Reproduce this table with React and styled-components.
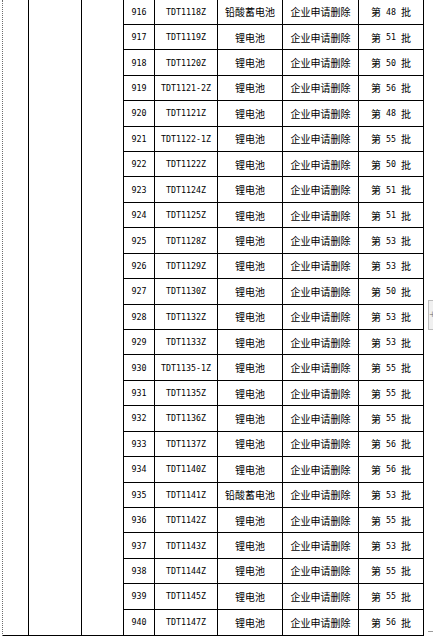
import React from "react";
import styled, { createGlobalStyle } from "styled-components";

const GlobalStyle = createGlobalStyle`
  html, body {
    margin: 0;
    padding: 0;
    background: #ffffff;
    overflow: hidden;
  }
  * {
    box-sizing: border-box;
  }
`;

const rows = [
  ["916", "TDT1118Z", "铅酸蓄电池", "48"],
  ["917", "TDT1119Z", "锂电池", "51"],
  ["918", "TDT1120Z", "锂电池", "50"],
  ["919", "TDT1121-2Z", "锂电池", "56"],
  ["920", "TDT1121Z", "锂电池", "48"],
  ["921", "TDT1122-1Z", "锂电池", "55"],
  ["922", "TDT1122Z", "锂电池", "50"],
  ["923", "TDT1124Z", "锂电池", "51"],
  ["924", "TDT1125Z", "锂电池", "51"],
  ["925", "TDT1128Z", "锂电池", "53"],
  ["926", "TDT1129Z", "锂电池", "53"],
  ["927", "TDT1130Z", "锂电池", "50"],
  ["928", "TDT1132Z", "锂电池", "53"],
  ["929", "TDT1133Z", "锂电池", "53"],
  ["930", "TDT1135-1Z", "锂电池", "55"],
  ["931", "TDT1135Z", "锂电池", "55"],
  ["932", "TDT1136Z", "锂电池", "55"],
  ["933", "TDT1137Z", "锂电池", "56"],
  ["934", "TDT1140Z", "锂电池", "56"],
  ["935", "TDT1141Z", "铅酸蓄电池", "53"],
  ["936", "TDT1142Z", "锂电池", "55"],
  ["937", "TDT1143Z", "锂电池", "53"],
  ["938", "TDT1144Z", "锂电池", "55"],
  ["939", "TDT1145Z", "锂电池", "55"],
  ["940", "TDT1147Z", "锂电池", "56"],
];

const Page = styled.div`
  position: relative;
  display: flex;
  height: 636px;
  padding-left: 2px;
  margin-top: -0.5px;
`;

const DottedRule = styled.div`
  width: 1px;
  height: 636px;
  border-left: 1px dotted #6e6e6e;
`;

const Sheet = styled.div`
  display: flex;
  align-self: flex-start;
  border-bottom: 2px solid #000;
`;

const MergedCol = styled.div`
  width: ${(p) => p.$w}px;
  border-right: 1px solid #000;
`;

const Rows = styled.div`
  display: flex;
  flex-direction: column;
`;

const Row = styled.div`
  display: grid;
  grid-template-columns: 31px 63px 65px 76px 65px;
  height: 25.43px;
  border-bottom: 1px solid #000;

  &:last-child {
    border-bottom: none;
  }
`;

const Cell = styled.div`
  display: flex;
  align-items: center;
  justify-content: center;
  border-right: 1px solid #000;
  color: #000;
  font-family: "Noto Sans CJK SC", "DejaVu Sans Mono", sans-serif;
  font-size: 10px;
  white-space: nowrap;
`;

const CodeCell = styled(Cell)`
  font-family: "DejaVu Sans Mono", "Liberation Mono", monospace;
  font-size: 8.3px;
`;

const Latin = styled.span`
  font-family: "DejaVu Sans Mono", "Liberation Mono", monospace;
  font-size: 8.3px;
  margin: 0 5px;
`;

const PageMarker = styled.div`
  position: absolute;
  left: 428px;
  top: 300px;
  width: 10px;
  height: 30px;
  background: #f0f0f0;
  border: 1px solid #bdbdbd;
  border-right: none;
  color: #8a8a8a;
  font-family: "DejaVu Sans", sans-serif;
  font-size: 8px;
  line-height: 28px;
  padding-left: 0;
`;

const EdgeLine = styled.div`
  position: absolute;
  left: 428px;
  top: 631px;
  width: 6px;
  height: 1px;
  background: #9a9a9a;
`;

export default function App() {
  return (
    <>
      <GlobalStyle />
      <Page>
        <DottedRule />
        <Sheet>
          <MergedCol $w={26} />
          <MergedCol $w={53} />
          <MergedCol $w={42} />
          <Rows>
            {rows.map(([no, model, kind, batch]) => (
              <Row key={no}>
                <CodeCell>{no}</CodeCell>
                <CodeCell>{model}</CodeCell>
                <Cell>{kind}</Cell>
                <Cell>企业申请删除</Cell>
                <Cell>
                  第<Latin>{batch}</Latin>批
                </Cell>
              </Row>
            ))}
          </Rows>
        </Sheet>
        <PageMarker>+</PageMarker>
        <EdgeLine />
      </Page>
    </>
  );
}
